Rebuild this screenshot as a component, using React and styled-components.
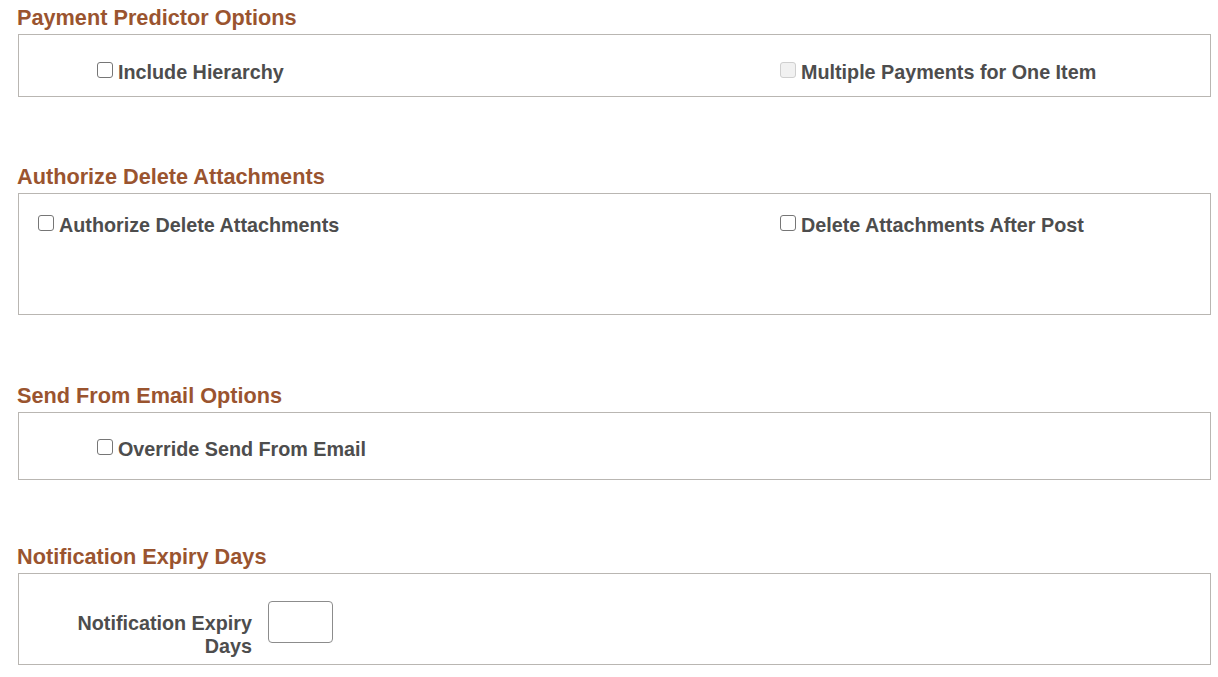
import React from "react";
import styled, { createGlobalStyle } from "styled-components";

const Global = createGlobalStyle`
  html, body { margin: 0; padding: 0; background: #ffffff; }
  body { font-family: "Liberation Sans", Arial, sans-serif; }
`;

const Page = styled.div`
  display: flex;
  flex-direction: column;
  padding: 4px 7px 0 18px;
  width: 1218px;
  box-sizing: border-box;
`;

const Section = styled.section`
  display: flex;
  flex-direction: column;
  margin-top: ${(p) => p.$gap || 0}px;
`;

const Heading = styled.h2`
  margin: 0 0 3px -1px;
  padding-top: 1px;
  font-size: 21.7px;
  line-height: 26px;
  font-weight: 700;
  color: #9a542f;
`;

const Box = styled.div`
  border: 1px solid #b9b6b2;
  box-sizing: border-box;
  height: ${(p) => p.$h}px;
  padding-top: ${(p) => p.$pt}px;
`;

const TwoCols = styled.div`
  display: grid;
  grid-template-columns: 761px 1fr;
`;

const Cell = styled.div`
  display: flex;
  align-items: flex-start;
  padding-left: ${(p) => p.$indent || 0}px;
`;

const Check = styled.input.attrs({ type: "checkbox" })`
  appearance: none;
  -webkit-appearance: none;
  margin: 1px 5px 0 0;
  width: 16px;
  height: 16px;
  flex: none;
  box-sizing: border-box;
  border: 1px solid ${(p) => (p.disabled ? "#cfcfcf" : "#767676")};
  background: ${(p) => (p.disabled ? "#f1f1f1" : "#ffffff")};
  border-radius: 3px;
`;

const Label = styled.label`
  font-size: 19.75px;
  line-height: 23px;
  font-weight: 700;
  color: #4d4d4d;
  white-space: nowrap;
`;

const FieldRow = styled.div`
  display: flex;
  align-items: flex-start;
  padding-left: 53px;
  gap: 16px;
`;

const FieldLabel = styled.label`
  width: 180px;
  margin-top: 11px;
  text-align: right;
  font-size: 19.75px;
  line-height: 23px;
  font-weight: 700;
  color: #4d4d4d;
`;

const TextInput = styled.input`
  width: 65px;
  height: 42px;
  box-sizing: border-box;
  border: 1px solid #8c8c8c;
  border-radius: 4px;
  background: #fff;
  padding: 0 6px;
  font-family: inherit;
  font-size: 16px;
`;

const CheckItem = ({ label, disabled }) => (
  <>
    <Check disabled={disabled} />
    <Label>{label}</Label>
  </>
);

export default function App() {
  return (
    <>
      <Global />
      <Page>
        <Section>
          <Heading>Payment Predictor Options</Heading>
          <Box $h={63} $pt={26}>
            <TwoCols>
              <Cell $indent={78}>
                <CheckItem label="Include Hierarchy" />
              </Cell>
              <Cell>
                <CheckItem label="Multiple Payments for One Item" disabled />
              </Cell>
            </TwoCols>
          </Box>
        </Section>

        <Section $gap={66}>
          <Heading>Authorize Delete Attachments</Heading>
          <Box $h={122} $pt={20}>
            <TwoCols>
              <Cell $indent={19}>
                <CheckItem label="Authorize Delete Attachments" />
              </Cell>
              <Cell>
                <CheckItem label="Delete Attachments After Post" />
              </Cell>
            </TwoCols>
          </Box>
        </Section>

        <Section $gap={67}>
          <Heading>Send From Email Options</Heading>
          <Box $h={68} $pt={25}>
            <TwoCols>
              <Cell $indent={78}>
                <CheckItem label="Override Send From Email" />
              </Cell>
            </TwoCols>
          </Box>
        </Section>

        <Section $gap={63}>
          <Heading>Notification Expiry Days</Heading>
          <Box $h={92} $pt={27}>
            <FieldRow>
              <FieldLabel htmlFor="ned">Notification Expiry Days</FieldLabel>
              <TextInput id="ned" />
            </FieldRow>
          </Box>
        </Section>
      </Page>
    </>
  );
}
